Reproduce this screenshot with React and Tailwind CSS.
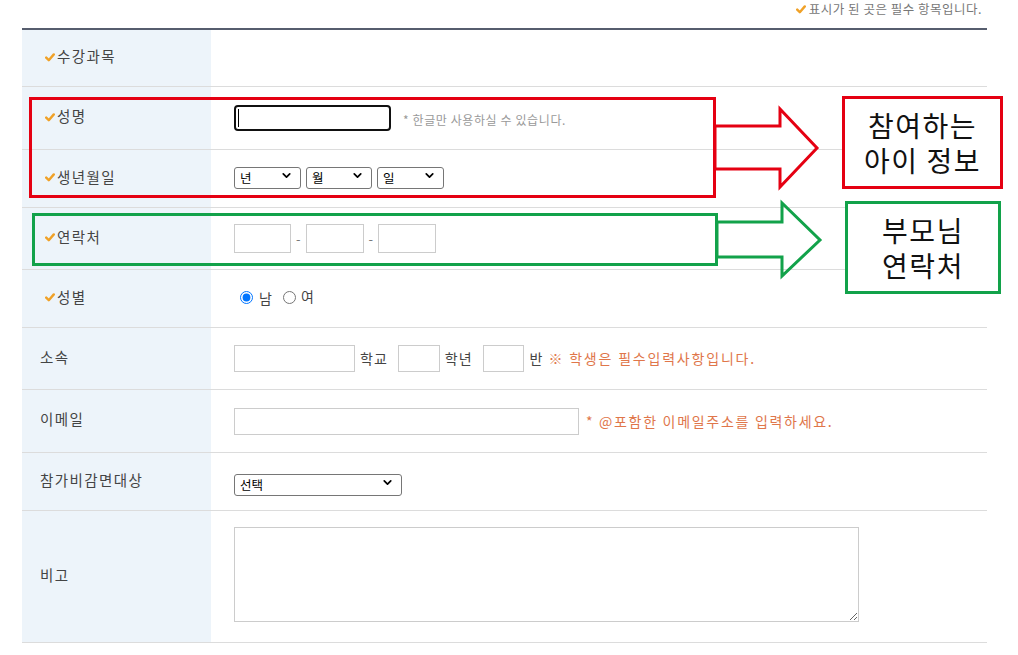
import React from "react";
import { ChevronDown } from "lucide-react";

const F = "font-['Noto_Sans_CJK_KR','Noto_Sans',sans-serif]";

function Check({ className = "" }) {
  return (
    <svg width="10" height="9" viewBox="0 0 10 9" className={className}>
      <path d="M1.2 4.6 L3.8 7.2 L8.8 1.4" fill="none" stroke="#f0a127" strokeWidth="2.4" strokeLinecap="round" strokeLinejoin="round" />
    </svg>
  );
}

function Row({ label, req, h, children }) {
  return (
    <div className={`grid grid-cols-[189px_1fr] border-b border-[#dcdcdc] ${h}`}>
      <div className={`bg-[#edf4fa] flex items-center ${req ? "pl-[23px]" : "pl-[18px]"}`}>
        {req && <Check className="mr-[2px] -mt-[2px]" />}
        <span className="text-[14.5px] tracking-[1.4px] text-[#444] leading-none -mt-[3px]">{label}</span>
      </div>
      <div className="flex items-center pl-[23px]">{children}</div>
    </div>
  );
}

function Sel({ w, label }) {
  return (
    <div className={`relative ${w} h-[22px]`}>
      <select className="appearance-none w-full h-full border border-[#767676] rounded-[3px] bg-white text-[12.5px] text-black pl-[5px] leading-none">
        <option>{label}</option>
      </select>
      <ChevronDown size={13} strokeWidth={3.2} className="absolute right-[8px] top-[5px] pointer-events-none text-black" />
    </div>
  );
}

function Box({ w, h }) {
  return <input className={`${w} ${h} border border-[#cccccc] bg-white`} />;
}

export default function App() {
  return (
    <div className={`relative w-[1018px] h-[655px] bg-white overflow-hidden ${F}`}>
      <div className="ml-[22px] w-[965px]">
        <div className="h-[28px] flex items-start justify-end pr-[5px] pt-[1px]">
          <div className="flex items-center gap-[3px]">
            <Check />
            <span className="text-[12.5px] tracking-[0.5px] text-[#777] leading-[16px]">표시가 된 곳은 필수 항목입니다.</span>
          </div>
        </div>
        <div className="border-t-2 border-[#565d6e]">
          <Row label="수강과목" req h="h-[57px]" />
          <Row label="성명" req h="h-[63px]">
            <div className="w-[157px] h-[26px] border-2 border-[#111] rounded-[4px] flex items-center -mt-[1px]">
              <span className="w-px h-[18px] bg-black ml-[2px]" />
            </div>
            <span className="ml-[12px] text-[12px] tracking-[0.6px] text-[#999] mt-[4px]">* 한글만 사용하실 수 있습니다.</span>
          </Row>
          <Row label="생년월일" req h="h-[58px]">
            <div className="flex gap-[5px] -mt-[7px]">
              <Sel w="w-[67px]" label="년" />
              <Sel w="w-[66px]" label="월" />
              <Sel w="w-[67px]" label="일" />
            </div>
          </Row>
          <Row label="연락처" req h="h-[62px]">
            <Box w="w-[57px]" h="h-[29px]" />
            <span className="mx-[5px] text-[13px] text-[#777]">-</span>
            <Box w="w-[58px]" h="h-[29px]" />
            <span className="mx-[5px] text-[13px] text-[#777]">-</span>
            <Box w="w-[58px]" h="h-[29px]" />
          </Row>
          <Row label="성별" req h="h-[58px]">
            <label className="flex items-center text-[14px] text-[#444] ml-[6px] -mt-[2px]">
              <input type="radio" name="g" defaultChecked className="w-[13px] h-[13px] m-0 accent-[#0075ff]" />
              <span className="ml-[6px] leading-none">남</span>
            </label>
            <label className="flex items-center text-[14px] text-[#444] ml-[11px] -mt-[2px]">
              <input type="radio" name="g" className="w-[13px] h-[13px] m-0" />
              <span className="ml-[5px] leading-none -mt-[4px]">여</span>
            </label>
          </Row>
          <Row label="소속" h="h-[62px]">
            <Box w="w-[121px]" h="h-[27px]" />
            <span className="ml-[5px] mr-[10px] text-[14px] tracking-[1px] text-[#444]">학교</span>
            <Box w="w-[42px]" h="h-[27px]" />
            <span className="ml-[5px] mr-[10px] text-[14px] tracking-[1px] text-[#444]">학년</span>
            <Box w="w-[41px]" h="h-[27px]" />
            <span className="ml-[6px] text-[14px] text-[#444]">반</span>
            <span className="ml-[6px] text-[14px] tracking-[1.8px] text-[#e0764a]">※ 학생은 필수입력사항입니다.</span>
          </Row>
          <Row label="이메일" h="h-[63px]">
            <Box w="w-[345px]" h="h-[27px]" />
            <span className="ml-[7px] text-[14px] tracking-[1.7px] text-[#e0764a]">* @포함한 이메일주소를 입력하세요.</span>
          </Row>
          <Row label="참가비감면대상" h="h-[58px]">
            <Sel w="w-[168px]" label="선택" />
          </Row>
          <Row label="비고" h="h-[132px]">
            <textarea className="w-[625px] h-[95px] border border-[#cccccc] bg-white -mt-[4px]" />
          </Row>
        </div>
      </div>

      {/* annotations */}
      <div className="absolute inset-0 pointer-events-none">
        <div className="absolute left-[29px] top-[97px] w-[687px] h-[101px] border-[3px] border-[#e50012]" />
        <div className="absolute left-[32px] top-[213px] w-[686px] h-[53px] border-[3px] border-[#12a24a]" />
        <svg width="1018" height="655" className="absolute left-0 top-0">
          <polygon points="715,126 780,126 780,109 817,148 780,187 780,169 715,169" fill="none" stroke="#e50012" strokeWidth="3" strokeLinejoin="miter" />
          <polygon points="717,222 782,222 782,203 820,240 782,276 782,257 717,257" fill="none" stroke="#12a24a" strokeWidth="3" strokeLinejoin="miter" />
        </svg>
        <div className="absolute left-[842px] top-[96px] w-[161px] h-[93px] border-[3px] border-[#e50012] bg-white flex items-center justify-center">
          <p className="text-center text-[28px] tracking-[1.5px] leading-[35px] text-[#111]">
            참여하는<br />아이 정보
          </p>
        </div>
        <div className="absolute left-[845px] top-[201px] w-[156px] h-[93px] border-[3px] border-[#12a24a] bg-white flex items-center justify-center">
          <p className="text-center text-[28px] tracking-[1.5px] leading-[35px] text-[#111]">
            부모님<br />연락처
          </p>
        </div>
      </div>
    </div>
  );
}
